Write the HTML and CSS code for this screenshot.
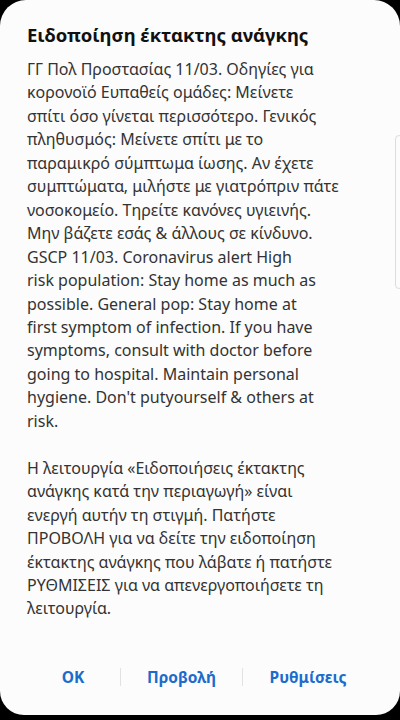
FILE: index.html
```html
<!DOCTYPE html>
<html lang="el">
<head>
  <meta charset="UTF-8" />
  <meta name="viewport" content="width=device-width, initial-scale=1.0"/>
  <title>Ειδοποίηση έκτακτης ανάγκης</title>
  <link rel="stylesheet" href="styles.css">
</head>
<body>
  <div class="dialog">
    <h2 class="title">Ειδοποίηση έκτακτης ανάγκης</h2>
    <div class="message">
      <p>ΓΓ Πολ Προστασίας 11/03. Οδηγίες για<br>
      κορονοϊό Ευπαθείς ομάδες: Μείνετε<br>
      σπίτι όσο γίνεται περισσότερο. Γενικός<br>
      πληθυσμός: Μείνετε σπίτι με το<br>
      παραμικρό σύμπτωμα ίωσης. Αν έχετε<br>
      συμπτώματα, μιλήστε με γιατρόπριν πάτε<br>
      νοσοκομείο. Τηρείτε κανόνες υγιεινής.<br>
      Μην βάζετε εσάς &amp; άλλους σε κίνδυνο.<br>
      GSCP 11/03. Coronavirus alert High<br>
      risk population: Stay home as much as<br>
      possible. General pop: Stay home at<br>
      first symptom of infection. If you have<br>
      symptoms, consult with doctor before<br>
      going to hospital. Maintain personal<br>
      hygiene. Don't putyourself &amp; others at<br>
      risk.</p>
      <p>Η λειτουργία «Ειδοποιήσεις έκτακτης<br>
      ανάγκης κατά την περιαγωγή» είναι<br>
      ενεργή αυτήν τη στιγμή. Πατήστε<br>
      ΠΡΟΒΟΛΗ για να δείτε την ειδοποίηση<br>
      έκτακτης ανάγκης που λάβατε ή πατήστε<br>
      ΡΥΘΜΙΣΕΙΣ για να απενεργοποιήσετε τη<br>
      λειτουργία.</p>
    </div>
    <div class="actions">
      <button class="action">OK</button>
      <span class="divider"></span>
      <button class="action">Προβολή</button>
      <span class="divider"></span>
      <button class="action">Ρυθμίσεις</button>
    </div>
  </div>
  <div class="edge-handle"></div>
</body>
</html>
```

FILE: styles.css
```css
html, body {
  margin: 0;
  height: 100%;
}

body {
  background: #000;
  font-family: "Noto Sans", sans-serif;
  overflow: hidden;
}

.dialog {
  display: flex;
  flex-direction: column;
  height: 715px;
  background: #fcfcfc;
  border-radius: 26px 26px 24px 24px;
  box-sizing: border-box;
  padding: 23px 0 0 27px;
}

.title {
  margin: 0;
  font-size: 18.5px;
  font-weight: bold;
  color: #111;
  line-height: 24px;
}

.message {
  margin-top: 11px;
  color: #333;
  font-size: 16px;
  line-height: 23.45px;
  white-space: nowrap;
}

.message p {
  margin: 0 0 23.45px;
}

.actions {
  display: grid;
  grid-template-columns: 94px 1px 121px 1px 130px;
  align-items: center;
  margin-top: auto;
  margin-bottom: 26px;
  margin-left: -1px;
}

.action {
  background: none;
  border: none;
  padding: 0;
  font-family: inherit;
  font-size: 15.5px;
  font-weight: bold;
  color: #1b6ccd;
  line-height: 24px;
}

.divider {
  height: 18px;
  background: #e2e2e2;
}

.edge-handle {
  position: absolute;
  top: 135px;
  left: 395px;
  width: 8px;
  height: 154px;
  border: 1px solid #dcdcdc;
  border-radius: 5px;
  box-sizing: border-box;
}
```
